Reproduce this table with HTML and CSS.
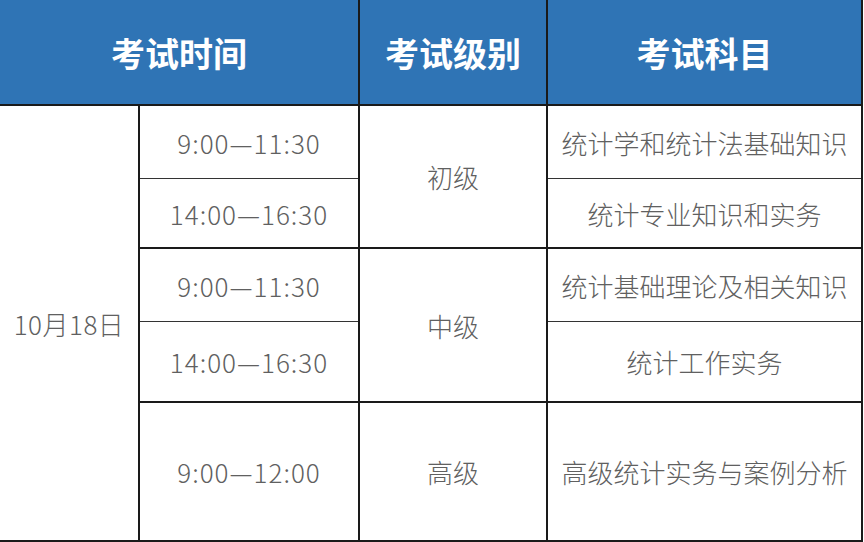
FILE: index.html
```html
<!DOCTYPE html>
<html lang="zh-CN">
<head>
<meta charset="utf-8">
<title>考试时间安排</title>
<link rel="stylesheet" href="styles.css">
</head>
<body>
<table class="exam">
  <colgroup>
    <col class="c-date">
    <col class="c-time">
    <col class="c-level">
    <col class="c-subject">
  </colgroup>
  <thead>
    <tr class="head">
      <th colspan="2">考试时间</th>
      <th>考试级别</th>
      <th>考试科目</th>
    </tr>
  </thead>
  <tbody>
    <tr class="r1">
      <td rowspan="5" class="date">10月18日</td>
      <td class="thin time">9:00—11:30</td>
      <td rowspan="2">初级</td>
      <td class="thin">统计学和统计法基础知识</td>
    </tr>
    <tr class="r2">
      <td class="time">14:00—16:30</td>
      <td>统计专业知识和实务</td>
    </tr>
    <tr class="r3">
      <td class="thin time">9:00—11:30</td>
      <td rowspan="2">中级</td>
      <td class="thin">统计基础理论及相关知识</td>
    </tr>
    <tr class="r4">
      <td class="time">14:00—16:30</td>
      <td>统计工作实务</td>
    </tr>
    <tr class="r5">
      <td class="time">9:00—12:00</td>
      <td>高级</td>
      <td>高级统计实务与案例分析</td>
    </tr>
  </tbody>
</table>
</body>
</html>
```
FILE: styles.css
```css
html, body {
  margin: 0;
  padding: 0;
  background: #ffffff;
}
body {
  font-family: "Noto Sans CJK SC", "Noto Sans", sans-serif;
}
.exam {
  border-collapse: collapse;
  table-layout: fixed;
  width: 862px;
}
.c-date { width: 139px; }
.c-time { width: 220px; }
.c-level { width: 188px; }
.c-subject { width: 315px; }

.head th {
  background: #2f74b5;
  color: #ffffff;
  font-size: 34px;
  font-weight: 700;
  height: 104px;
  padding: 0;
  border-right: 2px solid #1a1a1a;
  border-bottom: 2px solid #1a1a1a;
  text-align: center;
  vertical-align: middle;
}
.exam td {
  padding: 0;
  text-align: center;
  vertical-align: middle;
  font-size: 26px;
  font-weight: 200;
  color: #606060;
  border-right: 2px solid #1a1a1a;
  border-bottom: 2px solid #1a1a1a;
}
.exam td.time {
  letter-spacing: 1px;
}
.exam td.date {
  letter-spacing: 0.5px;
}
.exam td.thin {
  border-bottom: 1px solid #333333;
}
.r1 td { height: 72px; }
.r2 td { height: 68px; }
.r3 td { height: 72px; }
.r4 td { height: 79px; }
.r5 td { height: 137px; }
```
